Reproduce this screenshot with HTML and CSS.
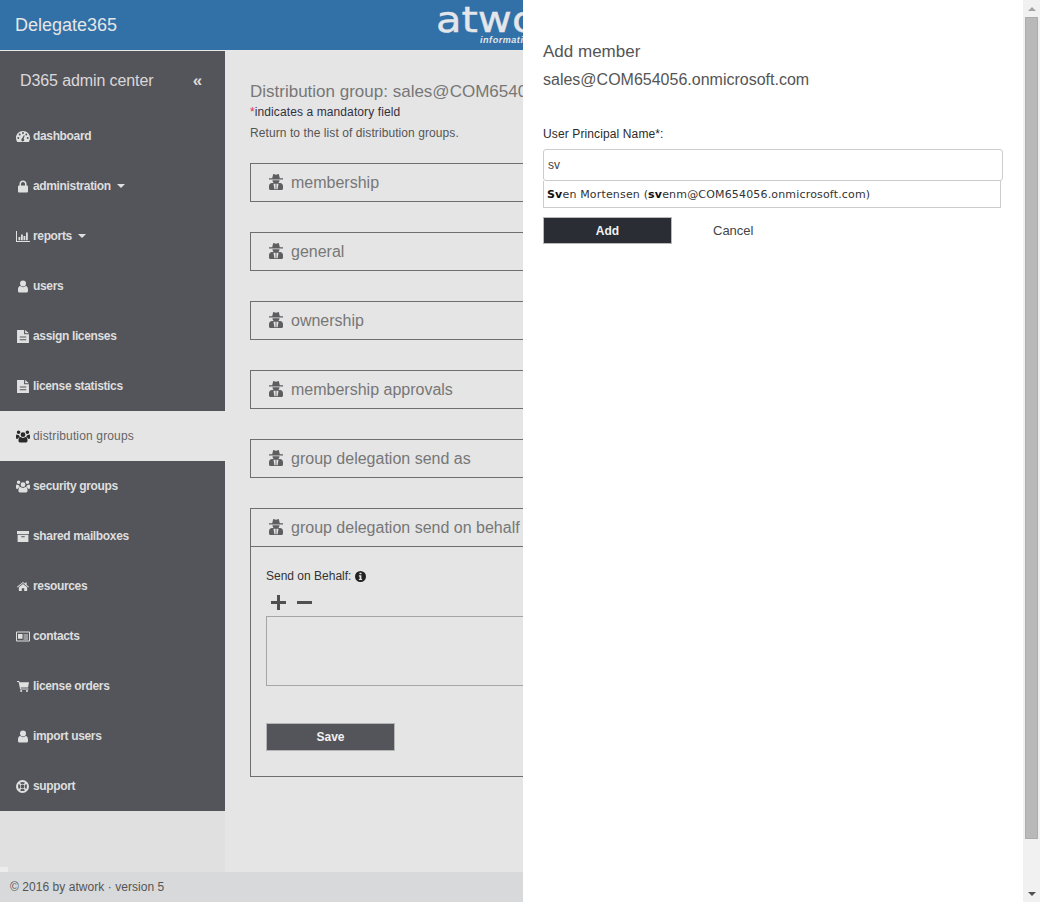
FILE: index.html
```html
<!DOCTYPE html>
<html lang="en">
<head>
<meta charset="utf-8">
<title>Delegate365</title>
<link rel="stylesheet" href="styles.css">
</head>
<body>
<svg class="defs" width="0" height="0">
  <symbol id="i-dash" viewBox="0 0 14 12"><path fill-rule="evenodd" d="M7 0.500C3.100 0.500 0 3.500 0 7.400c0 1.400.4 2.700 1.100 3.800.1.200.3.300.5.300h10.800c.2 0 .4-.1.5-.3.7-1.100 1.100-2.400 1.100-3.800C14 3.500 10.900.5 7 .5zM2.300 8.400a1 1 0 1 1 0-2 1 1 0 0 1 0 2zM3.700 5a1 1 0 1 1 0-2 1 1 0 0 1 0 2zM7 3.400a1 1 0 1 1 0-2 1 1 0 0 1 0 2zM8.300 9.300a1.500 1.500 0 1 1-2.300-1.200l1.900-3.400.8.300-1.100 3.500c.4.200.7.500.7.800zM10.300 5a1 1 0 1 1 0-2 1 1 0 0 1 0 2zM11.700 8.400a1 1 0 1 1 0-2 1 1 0 0 1 0 2z"/></symbol>
  <symbol id="i-lock" viewBox="0 0 10 12"><path d="M9 5H8.500V3.500a3.500 3.500 0 0 0-7 0V5H1a1 1 0 0 0-1 1v5a1 1 0 0 0 1 1h8a1 1 0 0 0 1-1V6a1 1 0 0 0-1-1zM3 5V3.500a2 2 0 0 1 4 0V5z"/></symbol>
  <symbol id="i-bars" viewBox="0 0 14 11"><path d="M0 0h1v10h13v1H0zM2.500 6h1.800v3.300H2.500zM5 3.500h1.800v5.800H5zM7.500 5h1.800v4.300H7.500zM10 1.500h1.800v7.800H10z"/></symbol>
  <symbol id="i-user" viewBox="0 0 10 12"><path d="M5 0a3 3 0 0 1 3 3 3 3 0 0 1-3 3 3 3 0 0 1-3-3 3 3 0 0 1 3-3zM2.300 5.600C3 6.300 4 6.700 5 6.700s2-.4 2.700-1.100C9.300 5.800 10 7.200 10 9.500v1c0 .9-.6 1.500-1.500 1.500h-7C.6 12 0 11.400 0 10.500v-1C0 7.200.7 5.800 2.300 5.600z"/></symbol>
  <symbol id="i-file" viewBox="0 0 11 12"><path fill-rule="evenodd" d="M0 0h6.500v4H11v8H0zM7.500 0L11 3H7.500zM2.500 6v1h6V6zM2.500 8.500v1h6v-1z"/></symbol>
  <symbol id="i-users" viewBox="0 0 14 12"><path d="M7 1.800a2.400 2.400 0 1 1 0 4.800 2.400 2.400 0 0 1 0-4.800zM2.600 0a1.800 1.800 0 1 1 0 3.600 1.800 1.800 0 0 1 0-3.600zM11.400 0a1.800 1.800 0 1 1 0 3.600 1.800 1.800 0 0 1 0-3.600zM0 5.300c0-.7.500-1.200 1-1.200.6.500 1.200.7 2 .7.200.7.500 1.300 1 1.700-1.200.3-2 1-2.500 1.900H.8C.3 8.400 0 8.100 0 7.600zM14 5.300c0-.7-.5-1.200-1-1.200-.6.500-1.200.7-2 .7-.2.700-.5 1.300-1 1.700 1.200.3 2 1 2.500 1.900h.7c.5 0 .8-.3.8-.8zM4.500 6.600c.7.500 1.500.8 2.500.8s1.800-.3 2.500-.8c1.300.2 2 1.100 2 2.800v1.200c0 .8-.6 1.400-1.400 1.400H3.900c-.8 0-1.400-.6-1.400-1.400V9.400c0-1.700.7-2.600 2-2.800z"/></symbol>
  <symbol id="i-box" viewBox="0 0 12 11"><path fill-rule="evenodd" d="M0 0h12v3H0zM.6 3.800h10.800V11H.6zM4.300 5.200v1.100h3.400V5.200z"/></symbol>
  <symbol id="i-home" viewBox="0 0 13 10"><path d="M6.500 2.200L11 5.900V9.500c0 .3-.2.500-.5.500H7.800V7H5.200v3H2.500c-.3 0-.5-.2-.5-.5V5.900zM6.500 0l2.500 2V.7h1.500v2.600L13 5.400l-.6.700-5.900-4.900L.6 6.100 0 5.400z"/></symbol>
  <symbol id="i-card" viewBox="0 0 14 10"><path fill-rule="evenodd" d="M1 0h12a1 1 0 0 1 1 1v8a1 1 0 0 1-1 1H1a1 1 0 0 1-1-1V1a1 1 0 0 1 1-1zM1 1v8h12V1zM2 2.500h4.500v4.800H2zM7.500 3H12v1H7.500zM7.500 5H12v1H7.500zM7.500 7H12v1H7.500z"/></symbol>
  <symbol id="i-cart" viewBox="0 0 13 12"><path d="M0 0h2.400l.4 1.500H13l-1 5.500H4.100l.3 1.200h8v1.100H3.500L1.700 1.100H0zM4.500 9.800a1.100 1.100 0 1 1 0 2.200 1.100 1.100 0 0 1 0-2.200zM10.800 9.800a1.100 1.100 0 1 1 0 2.200 1.100 1.100 0 0 1 0-2.200z"/></symbol>
  <symbol id="i-ring" viewBox="0 0 12 12"><path fill-rule="evenodd" d="M6 0a6 6 0 1 1 0 12A6 6 0 0 1 6 0zM3.800 2.400l.9 1.500a2.600 2.600 0 0 1 2.600 0l.9-1.500a4.400 4.400 0 0 0-4.400 0zM2.400 3.800a4.400 4.400 0 0 0 0 4.400l1.500-.9a2.600 2.600 0 0 1 0-2.600zM9.600 3.800l-1.500.9a2.600 2.600 0 0 1 0 2.600l1.500.9a4.400 4.400 0 0 0 0-4.400zM3.800 9.600a4.400 4.400 0 0 0 4.400 0l-.9-1.500a2.600 2.600 0 0 1-2.600 0zM6 4.200a1.800 1.800 0 1 0 0 3.600 1.800 1.800 0 0 0 0-3.600z"/></symbol>
  <symbol id="i-spy" viewBox="0 0 14 16"><path fill-rule="evenodd" d="M4.200 0L7 .7 9.800 0l1 4.300H14v1.200H0V4.300h3.200zM3.500 6.200h7c0 1.200-.5 2.100-1.200 2.700h1.700c1.900 0 3 1.400 3 3.200v2.400c0 .9-.6 1.500-1.500 1.500h-11C.6 16 0 15.400 0 14.500v-2.400c0-1.800 1.100-3.200 3-3.200h1.700c-.7-.6-1.200-1.500-1.200-2.700zM4.500 9.800l.9 5.400h1.200V9.800zM7.400 9.800v5.400h1.200l.9-5.400z"/></symbol>
  <symbol id="i-info" viewBox="0 0 12 12"><path fill-rule="evenodd" d="M6 0a6 6 0 1 1 0 12A6 6 0 0 1 6 0zM4.900 1.800v1.800h2.200V1.800zM4.200 4.700v1.200h.8v2.700h-.8v1.300h3.600V8.600H7V4.700z"/></symbol>
</svg>

<div class="window">
  <div class="page">
    <header class="topbar">
      <div class="brand">Delegate365</div>
      <div class="logo">
        <div class="logo-word">atwork</div>
        <div class="logo-sub">information</div>
      </div>
    </header>

    <div class="middle">
      <aside class="sidebar">
        <nav class="nav">
          <div class="nav-head"><span>D365 admin center</span><span class="collapse">«</span></div>
          <a class="nav-item"><svg class="ico ico-w14"><use href="#i-dash"/></svg>dashboard</a>
          <a class="nav-item"><svg class="ico ico-w10"><use href="#i-lock"/></svg>administration<i class="caret"></i></a>
          <a class="nav-item"><svg class="ico ico-w14"><use href="#i-bars"/></svg>reports<i class="caret"></i></a>
          <a class="nav-item"><svg class="ico ico-w10"><use href="#i-user"/></svg>users</a>
          <a class="nav-item"><svg class="ico ico-w11"><use href="#i-file"/></svg>assign licenses</a>
          <a class="nav-item"><svg class="ico ico-w11"><use href="#i-file"/></svg>license statistics</a>
          <a class="nav-item active"><svg class="ico ico-w14"><use href="#i-users"/></svg>distribution groups</a>
          <a class="nav-item"><svg class="ico ico-w14"><use href="#i-users"/></svg>security groups</a>
          <a class="nav-item"><svg class="ico ico-w12"><use href="#i-box"/></svg>shared mailboxes</a>
          <a class="nav-item"><svg class="ico ico-w12"><use href="#i-home"/></svg>resources</a>
          <a class="nav-item"><svg class="ico ico-w14"><use href="#i-card"/></svg>contacts</a>
          <a class="nav-item"><svg class="ico ico-w12"><use href="#i-cart"/></svg>license orders</a>
          <a class="nav-item"><svg class="ico ico-w10"><use href="#i-user"/></svg>import users</a>
          <a class="nav-item"><svg class="ico ico-w13"><use href="#i-ring"/></svg>support</a>
        </nav>
      </aside>

      <main class="main">
        <h1 class="title">Distribution group: sales@COM654056.onmicrosoft.com</h1>
        <p class="mandatory"><span class="star">*</span>indicates a mandatory field</p>
        <p class="back">Return to the list of distribution groups.</p>

        <section class="box"><h2 class="box-head"><svg class="spy"><use href="#i-spy"/></svg>membership</h2></section>
        <section class="box"><h2 class="box-head"><svg class="spy"><use href="#i-spy"/></svg>general</h2></section>
        <section class="box"><h2 class="box-head"><svg class="spy"><use href="#i-spy"/></svg>ownership</h2></section>
        <section class="box"><h2 class="box-head"><svg class="spy"><use href="#i-spy"/></svg>membership approvals</h2></section>
        <section class="box"><h2 class="box-head"><svg class="spy"><use href="#i-spy"/></svg>group delegation send as</h2></section>
        <section class="box open">
          <h2 class="box-head"><svg class="spy"><use href="#i-spy"/></svg>group delegation send on behalf</h2>
          <div class="box-body">
            <div class="field-label">Send on Behalf:<svg class="info"><use href="#i-info"/></svg></div>
            <div class="tools">
              <svg class="tool" viewBox="0 0 15 15"><path d="M6 0h3v6h6v3H9v6H6V9H0V6h6z"/></svg>
              <svg class="tool" viewBox="0 0 15 15"><path d="M0 6h15v3H0z"/></svg>
            </div>
            <div class="listbox"></div>
            <button class="btn btn-save" type="button">Save</button>
          </div>
        </section>
      </main>
    </div>

    <footer class="footer">© 2016 by atwork · version 5</footer>

    <aside class="panel">
      <div class="panel-title">Add member</div>
      <div class="panel-sub">sales@COM654056.onmicrosoft.com</div>
      <label class="upn-label">User Principal Name*:</label>
      <div class="upn-input">sv</div>
      <div class="suggest"><b>Sv</b>en Mortensen (<b>sv</b>enm@COM654056.onmicrosoft.com)</div>
      <div class="actions">
        <button class="btn btn-add" type="button">Add</button>
        <a class="cancel">Cancel</a>
      </div>
    </aside>
  </div>

  <div class="scrollbar">
    <div class="arrow-up"></div>
    <div class="track"><div class="thumb"></div></div>
    <div class="arrow-down"></div>
  </div>
</div>
</body>
</html>
```
FILE: styles.css
```css
* { box-sizing: border-box; }
html, body { margin: 0; height: 100%; overflow: hidden; }
body { font-family: "Liberation Sans", Arial, sans-serif; font-size: 12px; color: #333; }
.defs { position: absolute; }

.window { display: flex; width: 1040px; height: 902px; }
.page { position: relative; flex: 1 1 auto; min-width: 0; display: flex; flex-direction: column; overflow: hidden; }

/* scrollbar */
.scrollbar { flex: 0 0 17px; display: flex; flex-direction: column; background: #f1f1f1; }
.arrow-up, .arrow-down { flex: 0 0 17px; display: flex; align-items: center; justify-content: center; }
.arrow-up::before { content: ""; border: 4px solid transparent; border-top: 0; border-bottom: 4px solid #a3a3a3; }
.arrow-down::before { content: ""; border: 4px solid transparent; border-bottom: 0; border-top: 4px solid #505050; }
.track { flex: 1; padding: 0 2px 46px; display: flex; }
.thumb { flex: 1; background: #b9b9b9; border: 1px solid #acacac; }

/* top bar */
.topbar { flex: 0 0 51px; display: flex; background: #3270a8; border-bottom: 1px solid #e8e8e8; position: relative; }
.brand { font-size: 18px; color: #e6e6e6; padding-left: 15px; line-height: 50px; }
.logo { position: absolute; left: 436px; top: 0; white-space: nowrap; color: #e4e6e9; }
.logo-word { font-family: "DejaVu Sans", sans-serif; font-size: 35px; line-height: 35px; margin-top: 3px; transform: scaleX(1.19); transform-origin: 0 0; -webkit-text-stroke: .4px #e4e6e9; }
.logo-sub { font-size: 9px; font-weight: bold; font-style: italic; letter-spacing: .55px; margin: -3px 0 0 44px; line-height: 11px; }

/* sidebar */
.middle { flex: 1; display: flex; min-height: 0; }
.sidebar { position: relative; flex: 0 0 225px; background: #e0e0e0; }
.sidebar::after { content: ""; position: absolute; left: 0; bottom: 0; width: 8px; height: 5px; background: #ececec; }
.nav { background: #54555a; }
.nav-head { display: flex; justify-content: space-between; align-items: center; height: 60px; padding: 0 23px 0 20px; font-size: 16px; letter-spacing: -.1px; color: #dcd8da; }
.collapse { font-size: 17px; font-weight: bold; color: #ddd; }
.nav-item { display: flex; align-items: center; height: 50px; padding-left: 33px; position: relative; font-weight: bold; color: #dedede; letter-spacing: -.35px; }
.nav-item.active { background: #e5e5e5; color: #666; font-weight: normal; letter-spacing: .15px; }
.nav-item.active .ico { fill: #2a2a2a; }
.ico { position: absolute; left: 16px; top: 19px; height: 13px; width: 14px; fill: #e0e0e0; }
.ico-w14 { left: 16px; width: 14px; }
.ico-w13 { left: 16px; width: 13px; height: 13px; }
.ico-w12 { left: 17px; width: 12px; }
.ico-w11 { left: 17px; width: 12px; }
.ico-w10 { left: 18px; width: 10px; }
.caret { margin-left: 6px; border: 4px solid transparent; border-top: 4px solid #e0e0e0; border-bottom: 0; }

/* main */
.main { flex: 1; min-width: 0; background: #e5e5e5; padding: 31px 25px 0; }
.title { margin: 0; font-size: 17px; font-weight: normal; line-height: 19px; color: #777; white-space: nowrap; }
.mandatory { margin: 4px 0 0; line-height: 14px; letter-spacing: .1px; color: #33303f; }
.star { color: #e3324a; }
.back { margin: 7px 0 0; line-height: 14px; letter-spacing: .08px; color: #555; }
.box { border: 1px solid #6e6e6e; margin-top: 30px; height: 39px; }
.back + .box { margin-top: 23px; }
.box.open { height: 269px; }
.box-head { margin: 0; height: 37px; display: flex; align-items: center; padding-left: 18px; font-size: 16px; font-weight: normal; color: #777; white-space: nowrap; }
.open .box-head { height: 38px; border-bottom: 1px solid #6e6e6e; }
.spy { width: 14px; height: 16px; margin-right: 8px; fill: #5e5e60; flex: none; position: relative; top: -1px; }
.box-body { padding: 22px 15px 0; }
.field-label { display: flex; align-items: center; gap: 4px; line-height: 14px; color: #333; white-space: pre; }
.info { width: 11px; height: 11px; fill: #222; }
.tools { display: flex; gap: 11px; margin: 12px 0 0 5px; height: 15px; }
.tool { width: 15px; height: 15px; fill: #505050; }
.listbox { width: 100%; height: 70px; border: 1px solid #a6a6a6; margin-top: 6px; }
.btn { display: block; width: 129px; height: 28px; font: bold 12px "Liberation Sans", Arial, sans-serif; color: #f2f2f2; padding: 0; }
.btn-save { margin-top: 37px; background: #54555a; border: 1px solid #b5b5b5; }

/* footer */
.footer { flex: 0 0 30px; background: #d8d9db; padding-left: 10px; line-height: 30px; color: #555; letter-spacing: .05px; }

/* slide-in panel */
.panel { position: absolute; top: 0; right: 0; bottom: 0; width: 500px; background: #fff; padding: 42px 20px 0; }
.panel-title { font-size: 17px; line-height: 19px; color: #555; }
.panel-sub { font-size: 16px; line-height: 18px; margin-top: 10px; color: #555; }
.upn-label { display: block; margin-top: 38px; line-height: 14px; letter-spacing: .12px; color: #2a2a2a; }
.upn-input { height: 32px; width: 460px; margin-top: 8px; border: 1px solid #ccc; border-radius: 3px; padding-left: 4px; line-height: 30px; color: #444; }
.suggest { width: 458px; height: 27px; border: 1px solid #ccc; border-top: 0; padding-left: 3px; font-family: "DejaVu Sans", sans-serif; font-size: 11px; letter-spacing: .17px; line-height: 28px; color: #333; white-space: nowrap; }
.suggest b { color: #111; }
.actions { display: flex; align-items: center; margin-top: 9px; height: 27px; }
.btn-add { background: #2b2d35; border: 1px solid #b9b9b9; height: 27px; }
.cancel { margin-left: 41px; font-size: 13px; color: #444; }
```
